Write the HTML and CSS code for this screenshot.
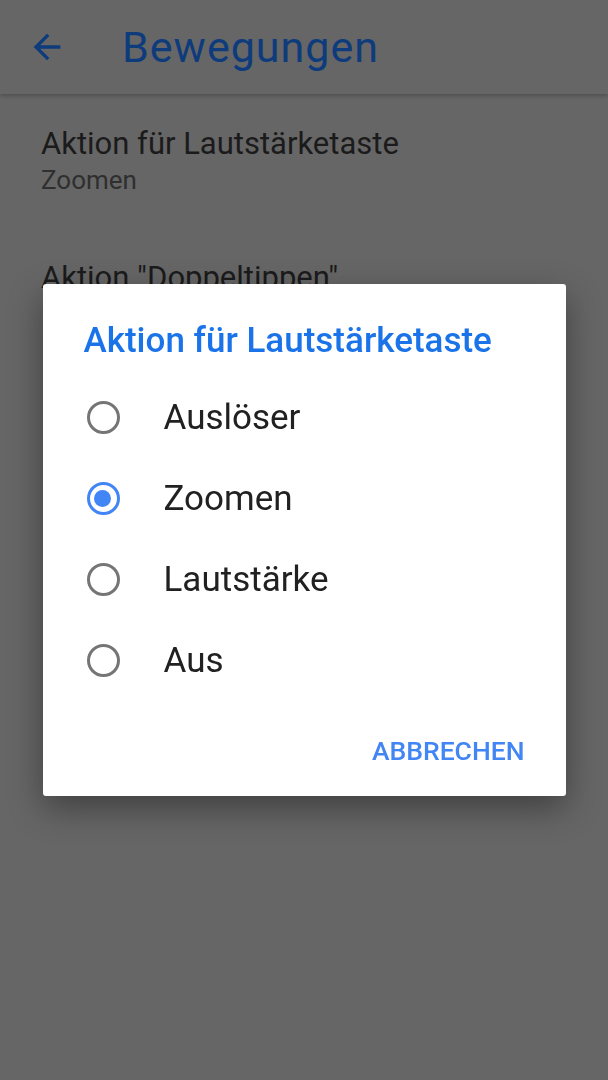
FILE: index.html
```html
<!DOCTYPE html>
<html lang="de">
<head>
    <meta charset="UTF-8">
    <meta name="viewport" content="width=device-width, initial-scale=1.0">
    <title>Bewegungen</title>
    <link rel="stylesheet" href="styles.css">
</head>
<body>
    <header class="app-bar">
        <button class="back-btn" aria-label="Zurück">
            <svg viewBox="0 0 24 24" width="40" height="40">
                <path d="M20 11H7.83l5.59-5.59L12 4l-8 8 8 8 1.41-1.41L7.83 13H20v-2z" fill="currentColor"/>
            </svg>
        </button>
        <h1 class="app-title">Bewegungen</h1>
    </header>

    <div class="pref-list">
        <div class="pref-item">
            <div class="pref-title">Aktion für Lautstärketaste</div>
            <div class="pref-summary">Zoomen</div>
        </div>
        <div class="pref-item">
            <div class="pref-title">Aktion "Doppeltippen"</div>
        </div>
    </div>

    <div class="scrim">
        <div class="dialog">
            <h2 class="dialog-title">Aktion für Lautstärketaste</h2>
            <div class="choices">
                <div class="choice">
                    <span class="radio"></span>
                    <span class="choice-label">Auslöser</span>
                </div>
                <div class="choice">
                    <span class="radio checked"></span>
                    <span class="choice-label">Zoomen</span>
                </div>
                <div class="choice">
                    <span class="radio"></span>
                    <span class="choice-label">Lautstärke</span>
                </div>
                <div class="choice">
                    <span class="radio"></span>
                    <span class="choice-label">Aus</span>
                </div>
            </div>
            <div class="dialog-actions">
                <button class="text-btn">ABBRECHEN</button>
            </div>
        </div>
    </div>
</body>
</html>
```

FILE: styles.css
```css
body {
    margin: 0;
    height: 100vh;
    background-color: #666666; /* page under the dim scrim */
    font-family: Roboto, 'Liberation Sans', Arial, sans-serif;
    overflow: hidden;
}
.app-bar {
    display: flex;
    align-items: center;
    height: 94px;
    background-color: #666666;
    box-shadow: 0 2px 4px rgba(0, 0, 0, 0.22);
    position: relative;
}
.back-btn {
    display: flex;
    padding: 0;
    margin-left: 27px;
    border: none;
    background: none;
    color: #0e3b7c;
}
.app-title {
    margin: 0 0 0 55px;
    font-size: 43px;
    font-weight: 400;
    letter-spacing: 1px;
    line-height: 94px;
    color: #0e3b7c;
}
.pref-item {
    padding: 29px 41px 32px;
}
.pref-title {
    font-size: 31px;
    line-height: 41px;
    color: #1b1b1b;
}
.pref-summary {
    font-size: 26px;
    line-height: 32px;
    color: #2f2f2f;
}
.scrim {
    position: fixed;
    inset: 0;
    display: flex;
    justify-content: center;
    align-items: center;
}
.dialog {
    width: 523px;
    padding: 37px 0 27px;
    background-color: #ffffff;
    border-radius: 3px;
    box-shadow: 0 12px 34px rgba(0, 0, 0, 0.38);
}
.dialog-title {
    margin: 0 0 16px 41px;
    font-size: 35px;
    font-weight: 500;
    line-height: 40px;
    color: #1a73e8;
}
.choice {
    display: flex;
    align-items: center;
    height: 81px;
    padding-left: 44px;
}
.radio {
    position: relative;
    width: 33px;
    height: 33px;
    box-sizing: border-box;
    border: 3.4px solid #757575;
    border-radius: 50%;
}
.radio.checked {
    border-color: #4285f4;
}
.radio.checked::after {
    content: "";
    position: absolute;
    top: 4.5px;
    left: 4.5px;
    width: 17px;
    height: 17px;
    border-radius: 50%;
    background-color: #4285f4;
}
.choice-label {
    margin-left: 44px;
    font-size: 35px;
    color: #212121;
}
.dialog-actions {
    display: flex;
    justify-content: flex-end;
    margin-top: 32px;
    padding-right: 41px;
}
.text-btn {
    padding: 0;
    border: none;
    background: none;
    font-family: inherit;
    font-size: 26.5px;
    font-weight: 500;
    line-height: 36px;
    color: #4285f4;
}
```
